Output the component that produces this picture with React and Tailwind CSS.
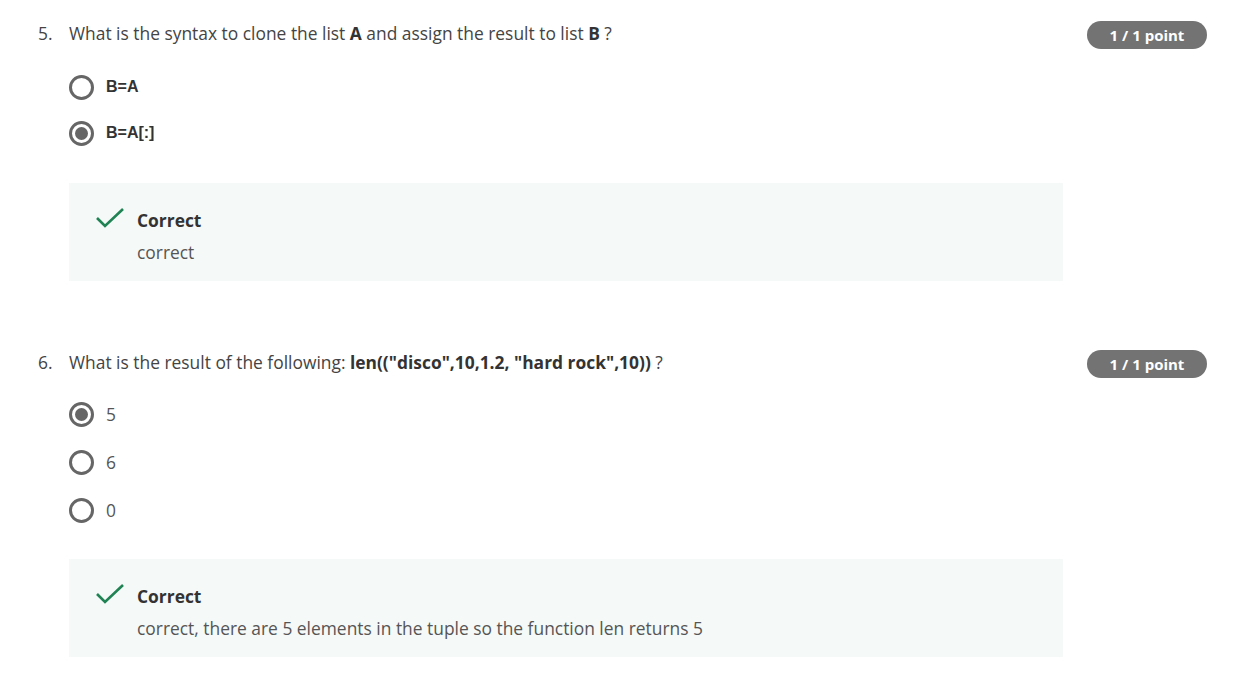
import React from 'react';

const openSans = { fontFamily: '"Open Sans", "Liberation Sans", sans-serif' };

function Radio({ checked }) {
    return (
        <span className="flex items-center justify-center w-[25px] h-[25px] rounded-full border-[3px] border-[#666666] bg-white shrink-0">
            {checked ? <span className="w-[13px] h-[13px] rounded-full bg-[#666666]" /> : null}
        </span>
    );
}

function Option({ label, checked, bold }) {
    return (
        <div className="flex items-center h-6">
            <Radio checked={checked} />
            <span
                className={bold
                    ? "ml-3 text-[16px] font-bold text-[#333333] font-['Liberation_Sans',Arial,sans-serif]"
                    : "ml-3 text-[17.4px] text-[#555555] font-['Open_Sans',sans-serif]"}
            >
                {label}
            </span>
        </div>
    );
}

function Feedback({ text, mt }) {
    return (
        <div className={`${mt} w-[994px] bg-[#f5f9f8] pt-[25px] pb-[17px] pl-[26px] flex items-start`}>
            <svg width="30" height="22" viewBox="0 0 30 22" className="mt-[-1px] shrink-0">
                <polyline points="2,11 10,19 28,2" fill="none" stroke="#1f8354" strokeWidth="2.6" />
            </svg>
            <div className="ml-[12px] font-['Open_Sans',sans-serif]">
                <p className="text-[17.4px] leading-6 font-bold text-[#333333]">Correct</p>
                <p className="mt-2 text-[17.4px] leading-6 text-[#555555]">{text}</p>
            </div>
        </div>
    );
}

function Question({ num, children, options, feedback, gap, top, optTop, boxTop }) {
    return (
        <div className={`flex items-start justify-between pr-[49px] ${top}`}>
            <div className="flex items-start">
                <span className="w-[31px] text-[17.4px] leading-6 text-[#444444]">{num}.</span>
                <div>
                    <p className="text-[17.4px] leading-6 text-[#444444]">{children}</p>
                    <div className={`${optTop} flex flex-col ${gap}`}>
                        {options.map((o, i) => (
                            <Option key={i} {...o} />
                        ))}
                    </div>
                    <Feedback text={feedback} mt={boxTop} />
                </div>
            </div>
            <span className="h-7 w-[120px] rounded-full bg-[#737373] text-white text-[15px] font-bold flex items-center justify-center">
                1 / 1 point
            </span>
        </div>
    );
}

export default function App() {
    return (
        <div className="min-h-screen bg-white pl-[38px]" style={openSans}>
            <Question
                num={5}
                top="pt-[21px]"
                optTop="mt-[30px]"
                boxTop="mt-[38px]"
                gap="gap-[22px]"
                options={[
                    { label: "B=A", checked: false, bold: true },
                    { label: "B=A[:]", checked: true, bold: true },
                ]}
                feedback="correct"
            >
                What is the syntax to clone the list <b className="font-bold text-[#333333]">A</b> and assign the result to list <b className="font-bold text-[#333333]">B</b> ?
            </Question>
            <Question
                num={6}
                top="pt-[69px]"
                optTop="mt-[28px]"
                boxTop="mt-[37px]"
                gap="gap-6"
                options={[
                    { label: "5", checked: true },
                    { label: "6", checked: false },
                    { label: "0", checked: false },
                ]}
                feedback="correct, there are 5 elements in the tuple so the function len returns 5"
            >
                What is the result of the following: <b className="font-bold text-[#333333]">len(("disco",10,1.2, "hard rock",10))</b> ?
            </Question>
        </div>
    );
}
